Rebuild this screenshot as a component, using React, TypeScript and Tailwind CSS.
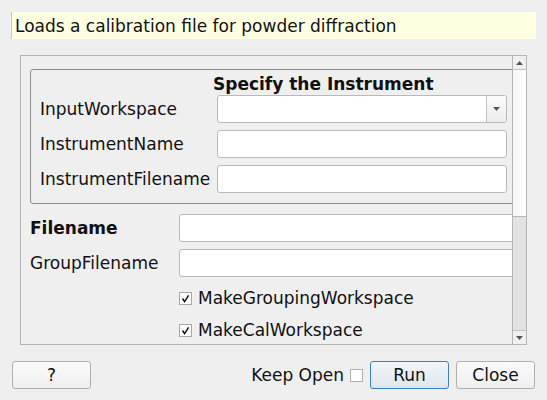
import React from "react";

function Check({ checked }: { checked: boolean }) {
  return (
    <div className="w-[13px] h-[13px] border border-[#a8a8a8] bg-white flex items-center justify-center shrink-0">
      {checked && (
        <svg width="11" height="11" viewBox="0 0 11 11">
          <path d="M2.5 5.5 L4.6 8.6 L8.6 2.4" fill="none" stroke="#111" strokeWidth="1.5" />
        </svg>
      )}
    </div>
  );
}

function TextBox({ w }: { w: string }) {
  return <div className={`h-[28px] ${w} bg-white border border-[#b9b9b9] rounded-[3px] shrink-0`} />;
}

export default function App() {
  return (
    <div className="w-[547px] h-[400px] bg-[#efefef] overflow-hidden font-['DejaVu_Sans',sans-serif] text-[17px] text-[#111] leading-[20px]">
      <div className="pt-[12px] pl-[11px] pr-[11px]">
        <div className="h-[27px] bg-[#ffffe1] border-l border-[#c8c8c8] flex items-center pl-[3px] pt-[1px]">
          Loads a calibration file for powder diffraction
        </div>
      </div>

      <div className="mt-[16px] ml-[20px] w-[507px] h-[290px] border border-[#b6b6b6] flex">
        <div className="w-[491px] h-full overflow-hidden">
          <div className="w-[520px] pl-[9px] pt-[13px]">
            <div className="w-[488px] h-[135px] border border-[#8e8e8e] rounded-[3px] pl-[9px]">
              <div className="h-[25px] pl-[173px] pt-[4px] font-bold">Specify the Instrument</div>
              <div className="flex flex-col gap-[7px]">
                <div className="flex items-center h-[28px]">
                  <div className="w-[177px]">InputWorkspace</div>
                  <div className="h-[28px] w-[290px] bg-white border border-[#b9b9b9] rounded-[3px] flex">
                    <div className="flex-1" />
                    <div className="w-[20px] h-full border-l border-[#c4c4c4] bg-gradient-to-b from-[#fbfbfb] to-[#ececec] rounded-r-[3px] flex items-center justify-center">
                      <svg width="7" height="4" viewBox="0 0 7 4">
                        <path d="M0 0 L7 0 L3.5 4 Z" fill="#555" />
                      </svg>
                    </div>
                  </div>
                </div>
                <div className="flex items-center h-[28px]">
                  <div className="w-[177px]">InstrumentName</div>
                  <TextBox w="w-[290px]" />
                </div>
                <div className="flex items-center h-[28px]">
                  <div className="w-[177px]">InstrumentFilename</div>
                  <TextBox w="w-[290px]" />
                </div>
              </div>
            </div>

            <div className="mt-[10px] flex flex-col gap-[7px]">
              <div className="flex items-center h-[28px]">
                <div className="w-[149px] font-bold">Filename</div>
                <TextBox w="w-[340px]" />
              </div>
              <div className="flex items-center h-[28px]">
                <div className="w-[149px]">GroupFilename</div>
                <TextBox w="w-[340px]" />
              </div>
            </div>

            <div className="mt-[7px] flex flex-col gap-[4px] pl-[149px]">
              <div className="flex items-center h-[28px] gap-[6px]">
                <Check checked />
                <span>MakeGroupingWorkspace</span>
              </div>
              <div className="flex items-center h-[28px] gap-[6px]">
                <Check checked />
                <span>MakeCalWorkspace</span>
              </div>
            </div>
          </div>
        </div>

        <div className="w-[14px] h-full border-l border-[#b6b6b6] flex flex-col">
          <div className="h-[14px] border-b border-[#c2c2c2] flex items-center justify-center bg-[#f0f0f0]">
            <svg width="7" height="4" viewBox="0 0 7 4">
              <path d="M3.5 0 L7 4 L0 4 Z" fill="#555" />
            </svg>
          </div>
          <div className="h-[147px] border-b border-[#b6b6b6] bg-gradient-to-r from-[#f6f6f6] to-[#ffffff]" />
          <div className="flex-1 bg-[#e2e2e2] border-b border-[#c2c2c2]" />
          <div className="h-[13px] flex items-center justify-center bg-[#f0f0f0]">
            <svg width="7" height="4" viewBox="0 0 7 4">
              <path d="M0 0 L7 0 L3.5 4 Z" fill="#555" />
            </svg>
          </div>
        </div>
      </div>

      <div className="mt-[16px] px-[12px] flex items-center justify-between">
        <button className="w-[79px] h-[28px] border border-[#b0b0b0] rounded-[3px] bg-gradient-to-b from-[#fbfbfb] to-[#efefef] flex items-center justify-center">
          ?
        </button>
        <div className="flex items-center">
          <span>Keep Open</span>
          <div className="ml-[6px] w-[13px] h-[13px] border border-[#b0b0b0] bg-white" />
          <button className="ml-[7px] w-[79px] h-[28px] border border-[#3b7fc0] rounded-[3px] bg-gradient-to-b from-[#f2f6fa] to-[#dde6ef] flex items-center justify-center">
            Run
          </button>
          <button className="ml-[7px] w-[79px] h-[28px] border border-[#b0b0b0] rounded-[3px] bg-gradient-to-b from-[#fbfbfb] to-[#efefef] flex items-center justify-center">
            Close
          </button>
        </div>
      </div>
    </div>
  );
}
